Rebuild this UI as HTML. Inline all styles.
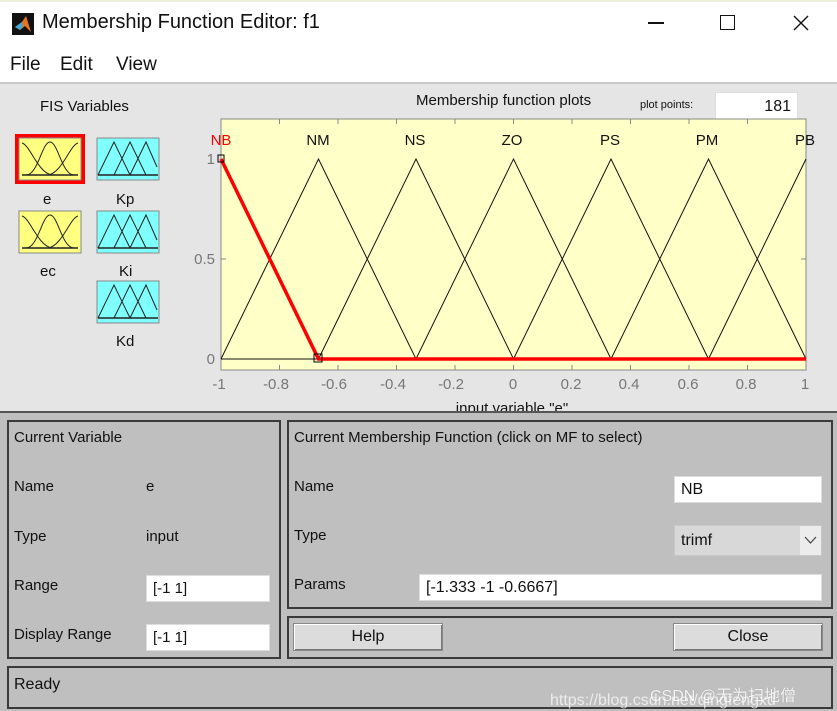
<!DOCTYPE html>
<html><head><meta charset="utf-8">
<style>
*{margin:0;padding:0;box-sizing:border-box}
body{width:837px;height:711px;overflow:hidden;background:#e5e5e5;font-family:"Liberation Sans",Arial,sans-serif;position:relative;color:#111}
.abs{position:absolute}
.t{position:absolute;font-size:15px;white-space:nowrap}
.panel{position:absolute;border:2px solid #3a3a3a;background:#bfbfbf}
.box{position:absolute;background:#fff;border:1px solid #ddd;font-size:15px;padding-left:6px;display:flex;align-items:center}
.btn{position:absolute;background:#dcdcdc;border:1px solid #888;box-shadow:inset 1px 1px 0 #fff,inset -1px -1px 0 #777;font-size:16px;display:flex;align-items:center;justify-content:center}
</style></head><body>
<div class="abs" style="left:0;top:0;width:837px;height:82px;background:#fff"></div>
<div class="abs" style="left:0;top:0;width:837px;height:2px;background:#eef0d8"></div>
<svg class="abs" style="top:13px;left:12px" width="22" height="22" viewBox="0 0 22 22"><rect width="22" height="22" fill="#111"/><path d="M3 14 L10 9 L14 3 L19 19 L13 13 L8 17Z" fill="#e8731c"/><path d="M3 14 L10 9 L11 13 L8 17Z" fill="#3fa9d6"/></svg>
<div class="t" style="left:42px;top:11px;font-size:20px">Membership Function Editor: f1</div>
<div class="abs" style="left:648px;top:22px;width:16px;height:1.5px;background:#111"></div>
<div class="abs" style="left:720px;top:15px;width:15px;height:15px;border:1.5px solid #111"></div>
<svg class="abs" style="left:793px;top:15px" width="16" height="16"><path d="M1 1 L15 15 M15 1 L1 15" stroke="#111" stroke-width="1.4"/></svg>
<div class="t" style="left:10px;top:54px;font-size:19px">File</div>
<div class="t" style="left:60px;top:54px;font-size:19px">Edit</div>
<div class="t" style="left:116px;top:54px;font-size:19px">View</div>
<div class="abs" style="left:0;top:82px;width:837px;height:2px;background:#c8c8c8"></div>

<div class="t" style="left:40px;top:98px">FIS Variables</div>
<svg class="abs" style="left:0;top:0" width="200" height="360">
<defs>
<g id="gauss"><rect x="1" y="1" width="62" height="42" fill="#ffff80" stroke="#888"/>
<path d="M4 6 C12 8 20 36 34 38 M8 38 C20 38 24 5 32 5 C40 5 44 38 56 38 M30 38 C44 36 52 8 60 6" fill="none" stroke="#222" stroke-width="1"/><line x1="4" y1="38" x2="60" y2="38" stroke="#222" stroke-width="1.5"/></g>
<g id="tri"><rect x="1" y="1" width="62" height="42" fill="#80ffff" stroke="#888"/>
<path d="M2 38 L18 5 L34 38 M18 38 L34 5 L50 38 M34 38 L50 5 L61 30" fill="none" stroke="#222" stroke-width="1"/><line x1="2" y1="38" x2="62" y2="38" stroke="#222" stroke-width="1.5"/></g>
</defs>
<rect x="17" y="136" width="66" height="46" fill="none" stroke="#f00" stroke-width="4"/>
<use href="#gauss" x="18" y="137"/>
<use href="#tri" x="96" y="137"/>
<use href="#gauss" x="18" y="210"/>
<use href="#tri" x="96" y="210"/>
<use href="#tri" x="96" y="280"/>
</svg>
<div class="t" style="left:43px;top:191px">e</div>
<div class="t" style="left:116px;top:191px">Kp</div>
<div class="t" style="left:40px;top:263px">ec</div>
<div class="t" style="left:119px;top:263px">Ki</div>
<div class="t" style="left:116px;top:333px">Kd</div>

<div class="t" style="left:416px;top:92px;font-size:15px">Membership function plots</div>
<div class="t" style="left:640px;top:99px;font-size:11px">plot points:</div>
<div class="box" style="left:715px;top:92px;width:83px;height:30px;justify-content:flex-end;padding-right:6px;font-size:16px">181</div>

<svg class="abs" style="left:0;top:0" width="837" height="420" font-family="Liberation Sans, Arial, sans-serif">
<rect x="221" y="119" width="585" height="251" fill="#ffffc8" stroke="#888"/>
<g stroke="#888" stroke-width="1">
<line x1="279.5" y1="119" x2="279.5" y2="124"/><line x1="338" y1="119" x2="338" y2="124"/><line x1="396.5" y1="119" x2="396.5" y2="124"/><line x1="455" y1="119" x2="455" y2="124"/><line x1="513.5" y1="119" x2="513.5" y2="124"/><line x1="572" y1="119" x2="572" y2="124"/><line x1="630.5" y1="119" x2="630.5" y2="124"/><line x1="689" y1="119" x2="689" y2="124"/><line x1="747.5" y1="119" x2="747.5" y2="124"/>
<line x1="279.5" y1="370" x2="279.5" y2="365"/><line x1="338" y1="370" x2="338" y2="365"/><line x1="396.5" y1="370" x2="396.5" y2="365"/><line x1="455" y1="370" x2="455" y2="365"/><line x1="513.5" y1="370" x2="513.5" y2="365"/><line x1="572" y1="370" x2="572" y2="365"/><line x1="630.5" y1="370" x2="630.5" y2="365"/><line x1="689" y1="370" x2="689" y2="365"/><line x1="747.5" y1="370" x2="747.5" y2="365"/>
<line x1="221" y1="259" x2="226" y2="259"/><line x1="806" y1="259" x2="801" y2="259"/>
</g>
<path d="M221 359 L318.5 159 L416 359 L513.5 159 L611 359 L708.5 159 L806 359 M318.5 359 L416 159 L513.5 359 L611 159 L708.5 359 L806 159" fill="none" stroke="#111" stroke-width="1"/>
<line x1="221" y1="359" x2="806" y2="359" stroke="#111" stroke-width="1"/>
<path d="M221 159 L318.5 359 L806 359" fill="none" stroke="#f00" stroke-width="3.5"/>
<rect x="218" y="155" width="6" height="7" fill="none" stroke="#000"/>
<rect x="314" y="354" width="8" height="8" fill="none" stroke="#000"/>
<g font-size="15" text-anchor="middle" fill="#111">
<text x="221" y="145" fill="#f00">NB</text><text x="318" y="145">NM</text><text x="415" y="145">NS</text><text x="512" y="145">ZO</text><text x="610" y="145">PS</text><text x="707" y="145">PM</text><text x="805" y="145">PB</text>
</g>
<g font-size="15" fill="#777" text-anchor="end">
<text x="215" y="164">1</text><text x="215" y="264">0.5</text><text x="215" y="364">0</text>
</g>
<g font-size="15" fill="#777" text-anchor="middle">
<text x="219" y="389">-1</text><text x="276" y="389">-0.8</text><text x="334" y="389">-0.6</text><text x="393" y="389">-0.4</text><text x="451" y="389">-0.2</text><text x="513" y="389">0</text><text x="571" y="389">0.2</text><text x="629" y="389">0.4</text><text x="688" y="389">0.6</text><text x="746" y="389">0.8</text><text x="805" y="389">1</text>
</g>
<text x="512" y="413" font-size="15" text-anchor="middle" fill="#111">input variable "e"</text>
</svg>

<div class="abs" style="left:0;top:411px;width:837px;height:300px;background:#bfbfbf;border-top:2px solid #555"></div>
<div class="panel" style="left:7px;top:420px;width:274px;height:239px"></div>
<div class="panel" style="left:287px;top:420px;width:546px;height:189px"></div>
<div class="panel" style="left:287px;top:616px;width:546px;height:43px"></div>
<div class="panel" style="left:7px;top:666px;width:826px;height:43px"></div>

<div class="t" style="left:14px;top:429px">Current Variable</div>
<div class="t" style="left:14px;top:478px">Name</div>
<div class="t" style="left:146px;top:478px">e</div>
<div class="t" style="left:14px;top:528px">Type</div>
<div class="t" style="left:146px;top:528px">input</div>
<div class="t" style="left:14px;top:577px">Range</div>
<div class="box" style="left:146px;top:575px;width:124px;height:27px">[-1 1]</div>
<div class="t" style="left:14px;top:626px">Display Range</div>
<div class="box" style="left:146px;top:624px;width:124px;height:27px">[-1 1]</div>

<div class="t" style="left:294px;top:429px">Current Membership Function (click on MF to select)</div>
<div class="t" style="left:294px;top:478px">Name</div>
<div class="box" style="left:674px;top:476px;width:148px;height:27px;font-size:16px">NB</div>
<div class="t" style="left:294px;top:527px">Type</div>
<div class="box" style="left:674px;top:525px;width:148px;height:31px;background:#d8d8d8;border-color:#c8c8c8;font-size:16px">trimf</div>
<div class="abs" style="left:800px;top:526px;width:21px;height:29px;background:#ececec"></div>
<svg class="abs" style="left:804px;top:535px" width="13" height="10"><path d="M1 2 L6.5 8 L12 2" fill="none" stroke="#444" stroke-width="1.2"/></svg>
<div class="t" style="left:294px;top:576px">Params</div>
<div class="box" style="left:419px;top:574px;width:403px;height:27px;font-size:16px">[-1.333 -1 -0.6667]</div>

<div class="btn" style="left:293px;top:623px;width:150px;height:28px">Help</div>
<div class="btn" style="left:673px;top:623px;width:150px;height:28px">Close</div>

<div class="t" style="left:14px;top:676px;font-size:16px">Ready</div>
<div class="t" style="left:650px;top:682px;font-size:16px;color:#fff;opacity:.85;text-shadow:0 0 1px #888">CSDN @无为扫地僧</div>
<div class="t" style="left:550px;top:692px;font-size:16px;color:#fff;opacity:.7">https://blog.csdn.net/qingfengxd</div>
</body></html>
